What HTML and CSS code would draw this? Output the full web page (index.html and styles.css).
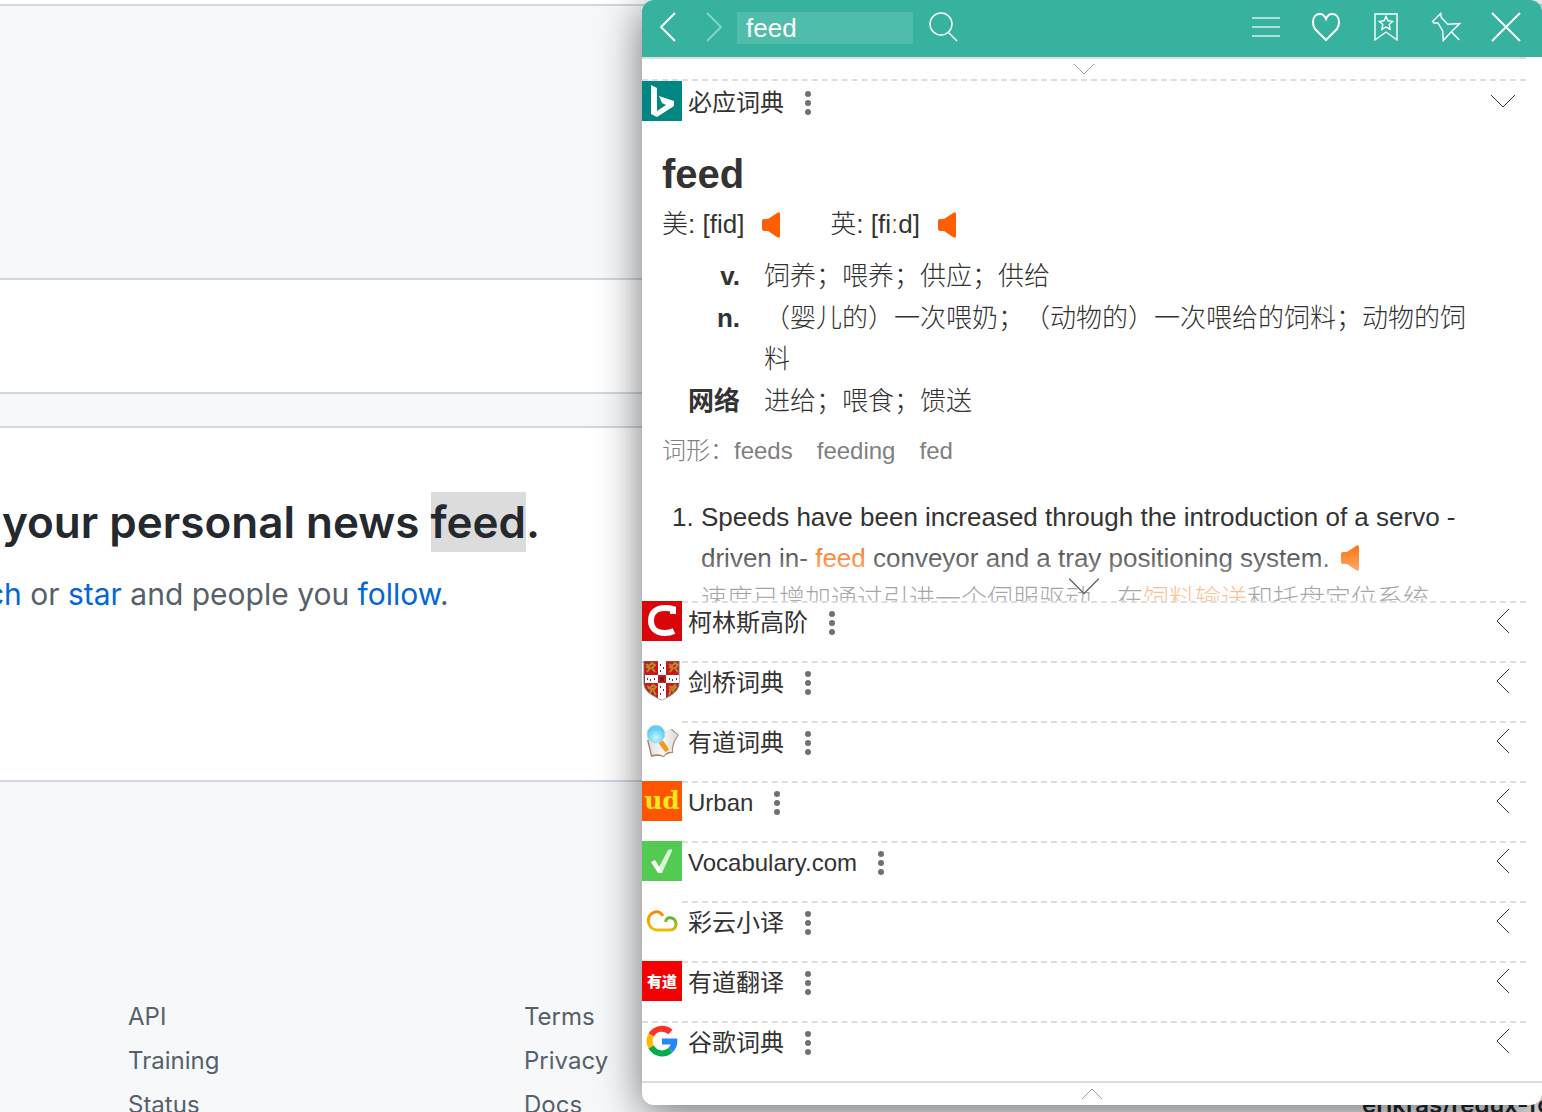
FILE: index.html
```html
<!DOCTYPE html>
<html lang="zh-CN">
<head>
<meta charset="utf-8">
<meta name="viewport" content="width=device-width, initial-scale=1">
<title>feed</title>
<link rel="stylesheet" href="styles.css">
</head>
<body>
<svg class="defs" aria-hidden="true">
  <symbol id="left" viewBox="0 0 24 24"><path d="M18 0L6 12l12 12" fill="none" stroke="currentColor"/></symbol>
  <symbol id="down" viewBox="0 0 24 24"><path d="M0 6l12 12L24 6" fill="none" stroke="currentColor"/></symbol>
  <symbol id="kebab" viewBox="0 0 8 24"><g fill="currentColor"><circle cx="4" cy="3" r="3"/><circle cx="4" cy="12" r="3"/><circle cx="4" cy="21" r="3"/></g></symbol>
  <symbol id="speaker" viewBox="0 0 18 26"><path d="M0 9q0-2 2-2h4L15 1q3-2 3 1v22q0 3-3 1l-9-6H2q-2 0-2-2z" fill="currentColor"/></symbol>
</svg>

<div class="page">
  <div class="strip strip-top"></div>
  <div class="strip strip-banner"></div>
  <div class="strip strip-card"></div>
  <div class="strip strip-gap"></div>
  <main class="news">
    <h2>your personal news <mark>feed</mark>.</h2>
    <p><a href="#">watch</a> or <a href="#">star</a> and people you <a href="#">follow</a>.</p>
  </main>
  <footer class="site-footer">
    <ul>
      <li><a href="#">API</a></li>
      <li><a href="#">Training</a></li>
      <li><a href="#">Status</a></li>
    </ul>
    <ul>
      <li><a href="#">Terms</a></li>
      <li><a href="#">Privacy</a></li>
      <li><a href="#">Docs</a></li>
    </ul>
    <a class="repo" href="#">erikras/redux-form</a>
  </footer>
</div>

<section class="panel" aria-label="词典">
  <header class="bar">
    <button class="nav" aria-label="后退"><svg width="28" height="28" viewBox="0 0 28 28"><path d="M21 0L7 14l14 14"/></svg></button>
    <button class="nav dim" aria-label="前进"><svg width="28" height="28" viewBox="0 0 28 28"><path d="M7 0l14 14L7 28"/></svg></button>
    <input type="text" value="feed" aria-label="搜索">
    <button class="tool" aria-label="查询"><svg class="thin" width="28" height="28" viewBox="0 0 28 28"><circle cx="12" cy="11" r="11"/><path d="M19 19l9 9"/></svg></button>
    <span class="spacer"></span>
    <button class="tool" aria-label="菜单"><svg class="soft" width="28" height="28" viewBox="0 0 28 28"><path d="M0 5h28M0 14h28M0 23h28"/></svg></button>
    <button class="tool" aria-label="收藏"><svg width="28" height="28" viewBox="0 0 28 28"><path d="M14 27L3 16Q1 13 1 9C1 4 4 1 8 1q4 0 6 5 2-5 6-5c4 0 7 3 7 8q0 4-2 7z"/></svg></button>
    <button class="tool" aria-label="生词本"><svg class="thin" width="28" height="28" viewBox="0 0 28 28"><path d="M3 1h22v26l-11-8-11 8z"/><path d="M14 3.500l2 4.300 4.600.6-3.400 3.200.9 4.700-4.100-2.300-4.100 2.300.9-4.700-3.400-3.200 4.600-.6z"/></svg></button>
    <button class="tool" aria-label="固定"><svg class="thin" width="28" height="28" viewBox="0 0 28 28"><path d="M8.700.5L.5 8.500 2 10h4l4.700 8 .6 9.500 8-8.800 8.500-8.200-12 .8L9.300 4.500zM19.300 18.700l8 8.300"/></svg></button>
    <button class="tool" aria-label="关闭"><svg width="28" height="28" viewBox="0 0 28 28"><path d="M0 0l28 28M28 0L0 28"/></svg></button>
  </header>

  <div class="results">
    <div class="tail"><svg width="20" height="20"><use href="#down"/></svg></div>

    <article class="entry open">
      <div class="head">
        <svg class="logo" viewBox="0 0 40 40"><path fill="#008683" d="M0 0h40v40H0z"/><path fill="#fff" d="M9 4l6 3v23l9-6-4-2-3-7 15 5v5L15 36l-6-3z"/></svg>
        <h3>必应词典</h3>
        <button class="more" aria-label="更多"><svg width="8" height="24"><use href="#kebab"/></svg></button>
        <button class="fold" aria-label="折叠"><svg width="24" height="24"><use href="#down"/></svg></button>
      </div>
      <div class="body">
        <h1>feed</h1>
        <div class="pron">
          <span>美: [fid]</span><button aria-label="美音"><svg width="18" height="26"><use href="#speaker"/></svg></button>
          <span>英: [fiːd]</span><button aria-label="英音"><svg width="18" height="26"><use href="#speaker"/></svg></button>
        </div>
        <dl>
          <dt>v.</dt><dd>饲养；喂养；供应；供给</dd>
          <dt>n.</dt><dd>（婴儿的）一次喂奶；（动物的）一次喂给的饲料；动物的饲料</dd>
          <dt>网络</dt><dd>进给；喂食；馈送</dd>
        </dl>
        <div class="forms"><span>词形：</span><span>feeds</span><span>feeding</span><span>fed</span></div>
        <ol>
          <li>Speeds have been increased through the introduction of a servo - driven in- <em>feed</em> conveyor and a tray positioning system. <button aria-label="朗读"><svg width="18" height="26"><use href="#speaker"/></svg></button><br>速度已增加通过引进一个伺服驱动，在<em>饲料输送</em>和托盘定位系统.</li>
        </ol>
        <button class="expand" aria-label="展开"><svg width="30" height="30"><use href="#down"/></svg></button>
      </div>
    </article>

    <article class="entry"><div class="head">
      <svg class="logo" viewBox="0 0 40 40"><path fill="#d90609" d="M0 0h40v40H0z"/><path fill="none" stroke="#fff" stroke-width="6" d="M31 13V8q-3-1-8-1C14 7 9 12 9 19.500S14 32 23 32q5 0 9-2"/></svg>
      <h3>柯林斯高阶</h3>
      <button class="more" aria-label="更多"><svg width="8" height="24"><use href="#kebab"/></svg></button>
      <button class="fold" aria-label="展开"><svg width="24" height="24"><use href="#left"/></svg></button>
    </div></article>

    <article class="entry"><div class="head">
      <svg class="logo" viewBox="0 0 40 40"><path fill="#c8171e" stroke="#777" d="M2 0h35v22c0 8-7 12-17 17C9 34 2 30 2 22z"/><path fill="#fff" d="M16 0h8v14h13v8H24v15l-4 2-4-2V22H3v-8h13z"/><path fill="#c8171e" d="M16 14h8v8h-8z"/><path fill="#6b1f18" d="M18 16h4v4h-4z"/><g fill="none" stroke="#b98a2c" stroke-width="2"><path d="M4 3l3 2 3-3 3 2-3 3 3 4M5 11l3-4-4-1M27 3l3 2 3-3 3 2-3 3 3 4M28 11l3-4-4-1M5 25l3 2 3-3 3 2-3 3 3 5M8 32l2-4-4-1M27 25l3 2 3-3 1 2-3 3 1 3M27 34l2-5-2-1"/></g><g fill="#444"><path d="M18 3h1v2h-1zM21 6h1v2h-1zM18 9h1v2h-1zM5 17h1v2H5zM8 18h1v2H8zM12 17h1v2h-1zM27 17h1v2h-1zM30 18h1v2h-1zM34 17h1v2h-1zM18 25h1v2h-1zM21 28h1v2h-1zM18 32h1v2h-1z"/></g></svg>
      <h3>剑桥词典</h3>
      <button class="more" aria-label="更多"><svg width="8" height="24"><use href="#kebab"/></svg></button>
      <button class="fold" aria-label="展开"><svg width="24" height="24"><use href="#left"/></svg></button>
    </div></article>

    <article class="entry"><div class="head">
      <svg class="logo" viewBox="0 0 40 40"><defs><linearGradient id="page-shade"><stop stop-color="#ddd"/><stop offset=".5" stop-color="#fafafa"/><stop offset="1" stop-color="#d8d8d8"/></linearGradient><radialGradient id="lens" cy=".7"><stop stop-color="#c4f7ff"/><stop offset="1" stop-color="#62cdf2"/></radialGradient></defs><path fill="#fff" d="M0 0h40v40H0z"/><path fill="#a98467" d="M5 19l4 17q7-2 13 0 3-4 9-4-1-9 6-18l-7-6z"/><path fill="url(#page-shade)" d="M6 17l4 17q7-2 12 1 3-5 8-4-1-9 6-17l-8-6-10 7z"/><path stroke="#f39b1d" stroke-width="5" stroke-linecap="round" d="M19 21l5 7"/><circle cx="14" cy="13" r="9" fill="url(#lens)" stroke="#b8dfee"/></svg>
      <h3>有道词典</h3>
      <button class="more" aria-label="更多"><svg width="8" height="24"><use href="#kebab"/></svg></button>
      <button class="fold" aria-label="展开"><svg width="24" height="24"><use href="#left"/></svg></button>
    </div></article>

    <article class="entry"><div class="head">
      <svg class="logo" viewBox="0 0 40 40"><path fill="#ff5500" d="M0 0h40v40H0z"/><text class="ud" x="20" y="28" text-anchor="middle">ud</text></svg>
      <h3>Urban</h3>
      <button class="more" aria-label="更多"><svg width="8" height="24"><use href="#kebab"/></svg></button>
      <button class="fold" aria-label="展开"><svg width="24" height="24"><use href="#left"/></svg></button>
    </div></article>

    <article class="entry"><div class="head">
      <svg class="logo" viewBox="0 0 40 40"><path fill="#53cb53" d="M0 0h40v40H0z"/><path fill="#d9f4d9" d="M16 28L26 9l4-1v2L20 32h-4z"/><path fill="#fff" d="M13 19l5 8 2 5h-4L9 21z"/></svg>
      <h3>Vocabulary.com</h3>
      <button class="more" aria-label="更多"><svg width="8" height="24"><use href="#kebab"/></svg></button>
      <button class="fold" aria-label="展开"><svg width="24" height="24"><use href="#left"/></svg></button>
    </div></article>

    <article class="entry"><div class="head">
      <svg class="logo" viewBox="0 0 40 40"><defs><linearGradient id="sun" x2="0" y2="1"><stop stop-color="#f98a0c"/><stop offset="1" stop-color="#ecbd08"/></linearGradient><linearGradient id="leaf" x2="0" y2="1"><stop stop-color="#5cb531"/><stop offset="1" stop-color="#d9bb0c"/></linearGradient></defs><path fill="#fefefe" d="M0 0h40v40H0z"/><g fill="none" stroke-width="3"><path stroke="url(#sun)" d="M21 15Q18 10 13 11c-9 2-9 16 1 18h15"/><path stroke="url(#leaf)" d="M24 21c-1-6 10-6 10 2q0 5-5 6"/></g></svg>
      <h3>彩云小译</h3>
      <button class="more" aria-label="更多"><svg width="8" height="24"><use href="#kebab"/></svg></button>
      <button class="fold" aria-label="展开"><svg width="24" height="24"><use href="#left"/></svg></button>
    </div></article>

    <article class="entry"><div class="head">
      <svg class="logo" viewBox="0 0 40 40"><path fill="#f50000" d="M0 0h40v40H0z"/><text class="youdao" x="20" y="26" text-anchor="middle">有道</text></svg>
      <h3>有道翻译</h3>
      <button class="more" aria-label="更多"><svg width="8" height="24"><use href="#kebab"/></svg></button>
      <button class="fold" aria-label="展开"><svg width="24" height="24"><use href="#left"/></svg></button>
    </div></article>

    <article class="entry"><div class="head">
      <svg class="logo" viewBox="0 0 40 40"><circle cx="20" cy="20" r="16" fill="#fff"/><g fill="none" stroke-width="6"><path stroke="#ff3129" d="M9.200 14A12.500 12.500 0 0 1 28.500 11"/><path stroke="#ffba00" d="M9.200 26a12.500 12.500 0 0 1 0-12"/><path stroke="#00ac47" d="M28.500 29.200A12.500 12.500 0 0 1 9.200 26"/><path stroke="#2a84fc" d="M20 20.500h12.300q0 5-3.800 8.700"/></g></svg>
      <h3>谷歌词典</h3>
      <button class="more" aria-label="更多"><svg width="8" height="24"><use href="#kebab"/></svg></button>
      <button class="fold" aria-label="展开"><svg width="24" height="24"><use href="#left"/></svg></button>
    </div></article>
  </div>

  <button class="collapse" aria-label="收起"><svg width="20" height="20"><use href="#down"/></svg></button>
</section>
</body>
</html>
```
FILE: styles.css
```css
* { box-sizing: border-box; }

body {
  margin: 0;
  height: 100vh;
  overflow: hidden;
  position: relative;
  background: #f6f8fa;
  font-family: Inter, "Noto Sans CJK SC", sans-serif;
}

h1, h2, h3, p, ul, ol, dl, dd { margin: 0; padding: 0; }
ul { list-style: none; }
a { text-decoration: none; }
button { border: 0; padding: 0; background: none; color: inherit; font: inherit; }
svg { display: block; }
.defs { position: absolute; width: 0; height: 0; }

/* Page behind the dictionary */
.strip { border-bottom: 2px solid #d0d7de; }
.strip-top { height: 6px; background: #fff; }
.strip-banner { height: 274px; }
.strip-card { height: 114px; background: #fff; }
.strip-gap { height: 34px; }

.news {
  padding: 64px 0 162px;
  background: #fff;
  border-bottom: 2px solid #d0d7de;
  white-space: nowrap;
}
.news h2 {
  padding-left: 2px;
  font-size: 44px;
  line-height: 60px;
  font-weight: 600;
  color: #24292f;
}
.news mark { display: inline-block; background: #dcdcdc; color: inherit; }
.news p {
  margin: 18px 0 0 -64px;
  font-size: 30px;
  line-height: 48px;
  color: #57606a;
}
.news p a { color: #0366d6; }

.site-footer {
  display: grid;
  grid-template-columns: 396px 1fr 180px;
  padding: 213px 0 0 128px;
  font-size: 24px;
  line-height: 44px;
}
.site-footer a { color: #57606a; }
.site-footer .repo {
  align-self: end;
  font-weight: 600;
  color: #24292f;
  white-space: nowrap;
  overflow: hidden;
}

/* Dictionary panel */
.panel {
  position: absolute;
  top: 0;
  right: 0;
  width: 900px;
  max-width: 100%;
  background: #fff;
  border-radius: 12px;
  overflow: hidden;
  box-shadow: 0 8px 44px rgba(0, 0, 0, .55);
  font-family: "Liberation Sans", "Noto Sans CJK SC", sans-serif;
  color: #333;
  text-spacing-trim: space-all;
}

.bar {
  display: flex;
  align-items: center;
  height: 57px;
  padding: 0 6px 3px 3px;
  background: #36b29e;
  color: #fff;
}
.bar svg { margin: auto; overflow: visible; fill: none; stroke: #fff; stroke-width: 2; }
.bar .thin { stroke-width: 1.4; }
.bar .soft { opacity: .6; }
.bar .nav { width: 46px; }
.bar .dim { opacity: .4; }
.bar .tool { width: 60px; }
.bar .spacer { flex: 1; }
.bar input {
  width: 176px;
  height: 32px;
  margin-top: 2px;
  padding: 0 9px;
  border: 0;
  background: rgba(255, 255, 255, .13);
  color: #fff;
  font: 26px "Liberation Sans", sans-serif;
}

.results { padding-right: 16px; }
.tail { height: 22px; border-top: 2px solid #ddd; }
.tail svg { margin: 0 auto; color: #888; }

.entry { border-top: 2px dashed #ddd; height: 60px; }
.head { display: flex; align-items: center; height: 40px; margin-top: -2px; }
.logo { width: 40px; height: 40px; margin-right: 6px; }
.head h3 { padding-top: 4px; font-size: 24px; line-height: 40px; font-weight: 400; }
.more { margin-left: 20px; color: #707070; }
.more svg { margin-top: 4px; }
.fold { margin-left: auto; padding-right: 11px; }

.open { height: 522px; overflow: hidden; }
.open .head { margin-top: 0; }
.body {
  position: relative;
  height: 480px;
  padding: 29px 20px 0;
  font-size: 26px;
  line-height: 41px;
  font-weight: 300;
  overflow: hidden;
}
.body::after {
  content: "";
  position: absolute;
  inset: auto 0 0;
  height: 60px;
  background: linear-gradient(rgba(255, 255, 255, 0), rgba(255, 255, 255, .5) 60%, rgba(255, 255, 255, .6));
}
.body h1 { font-size: 40px; line-height: 48px; }
.pron { display: flex; align-items: center; margin-top: 6px; }
.pron button { margin: 0 50px 0 18px; color: #ff5e00; }
.body dl {
  display: grid;
  grid-template-columns: 78px 1fr;
  gap: 1px 24px;
  margin: 11px 20px 0 0;
}
.body dt { font-weight: 700; text-align: right; }
.forms {
  display: flex;
  gap: 24px;
  margin-top: 13px;
  font-size: 24px;
  line-height: 32px;
  color: #808080;
}
.forms span:first-child { margin-right: -24px; }
.body ol { margin-top: 30px; padding-left: 39px; }
.body li button { display: inline-block; margin-left: 4px; vertical-align: -4px; line-height: 26px; color: #ff6a00; }
.body em { font-style: normal; color: #ff6a00; }
.expand {
  position: absolute;
  z-index: 1;
  left: 50%;
  bottom: 0;
  margin-left: -15px;
  color: #666;
}

.collapse {
  display: block;
  width: 100%;
  height: 24px;
  border-top: 2px solid #ddd;
  color: #888;
}
.collapse svg { margin: 0 auto; transform: rotate(180deg); }

.ud { font: 700 25px "DejaVu Serif", serif; fill: #ffe81a; }
.youdao { font: 900 15px "Noto Sans CJK SC", sans-serif; fill: #fff; }
```
